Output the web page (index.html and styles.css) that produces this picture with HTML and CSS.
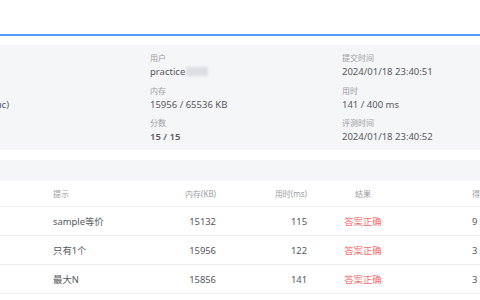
FILE: index.html
```html
<!DOCTYPE html>
<html lang="zh-CN">

<head>
  <meta charset="UTF-8" />
  <meta name="viewport" content="width=device-width, initial-scale=1.0" />
  <title>评测详情</title>
  <link rel="stylesheet" href="styles.css">
</head>

<body>
  <header class="topbar"></header>

  <main class="page">
    <!-- 提交信息 -->
    <section class="info-panel">
      <div class="info-col col-lang">
        <div class="info-item spacer"><div class="label">&nbsp;</div><div class="value">&nbsp;</div></div>
        <div class="info-item">
          <div class="label">语言</div>
          <div class="value">GNU C (gnuc)</div>
        </div>
      </div>
      <div class="info-col">
        <div class="info-item">
          <div class="label">用户</div>
          <div class="value">practice<span class="masked"></span></div>
        </div>
        <div class="info-item">
          <div class="label">内存</div>
          <div class="value">15956 / 65536 KB</div>
        </div>
        <div class="info-item">
          <div class="label">分数</div>
          <div class="value strong">15 / 15</div>
        </div>
      </div>
      <div class="info-col">
        <div class="info-item">
          <div class="label">提交时间</div>
          <div class="value">2024/01/18 23:40:51</div>
        </div>
        <div class="info-item">
          <div class="label">用时</div>
          <div class="value">141 / 400 ms</div>
        </div>
        <div class="info-item">
          <div class="label">评测时间</div>
          <div class="value">2024/01/18 23:40:52</div>
        </div>
      </div>
    </section>

    <!-- 测试点 -->
    <section class="case-table">
      <div class="case-bar"></div>
      <div class="case-row case-head">
        <div></div>
        <div>提示</div>
        <div class="num">内存(KB)</div>
        <div class="num">用时(ms)</div>
        <div class="center">结果</div>
        <div class="score">得分</div>
      </div>
      <div class="case-row">
        <div></div>
        <div>sample等价</div>
        <div class="num">15132</div>
        <div class="num">115</div>
        <div class="center ac">答案正确</div>
        <div class="score">9 / 9</div>
      </div>
      <div class="case-row">
        <div></div>
        <div>只有1个</div>
        <div class="num">15956</div>
        <div class="num">122</div>
        <div class="center ac">答案正确</div>
        <div class="score">3 / 3</div>
      </div>
      <div class="case-row">
        <div></div>
        <div>最大N</div>
        <div class="num">15856</div>
        <div class="num">141</div>
        <div class="center ac">答案正确</div>
        <div class="score">3 / 3</div>
      </div>
    </section>
  </main>
</body>

</html>
```

FILE: styles.css
```css
:root {
  --panel-bg: #f5f6f8;
  --line: #ebeef3;
  --label: #9a9da3;
  --text: #55585e;
  --primary: #4f9ef5;
  --danger: #f66b6b;
}

body {
  margin: 0;
  font-family: "Noto Sans", "Noto Sans CJK SC", sans-serif;
  background-color: #fff;
  color: var(--text);
  overflow: hidden;
}

/* 顶部 */
.topbar {
  height: 34px;
  border-bottom: 2px solid var(--primary);
}

.page {
  padding-top: 9px;
}

/* 信息面板 */
.info-panel {
  display: grid;
  grid-template-columns: 290px 192px 1fr;
  margin-left: -140px;
  padding: 6px 0;
  background-color: var(--panel-bg);
}

.info-col {
  display: flex;
  flex-direction: column;
  gap: 4.5px;
}

.col-lang {
  align-items: flex-end;
  padding-right: 141px;
}

.label {
  font-size: 8px;
  line-height: 14px;
  color: var(--label);
}

.value {
  font-size: 9.5px;
  line-height: 14px;
  color: var(--text);
  white-space: nowrap;
}

.value.strong {
  font-weight: 600;
  color: #5a5d63;
}

.masked {
  display: inline-block;
  width: 22px;
  height: 9px;
  margin-left: 1px;
  vertical-align: -1px;
  background-color: #dcdee2;
  filter: blur(1.5px);
}

/* 测试点表格 */
.case-table {
  margin-top: 10px;
}

.case-bar {
  height: 21px;
  background-color: var(--panel-bg);
}

.case-row {
  display: grid;
  grid-template-columns: 53px 83px 80px 91px 112px 1fr;
  height: 28px;
  align-items: center;
  border-bottom: 1px solid var(--line);
  font-size: 9.4px;
  white-space: nowrap;
}

.case-head {
  height: 25px;
  font-size: 8px;
  color: var(--label);
}

.num {
  text-align: right;
}

.center {
  text-align: center;
}

.score {
  padding-left: 53px;
}

.ac {
  color: var(--danger);
}
```
